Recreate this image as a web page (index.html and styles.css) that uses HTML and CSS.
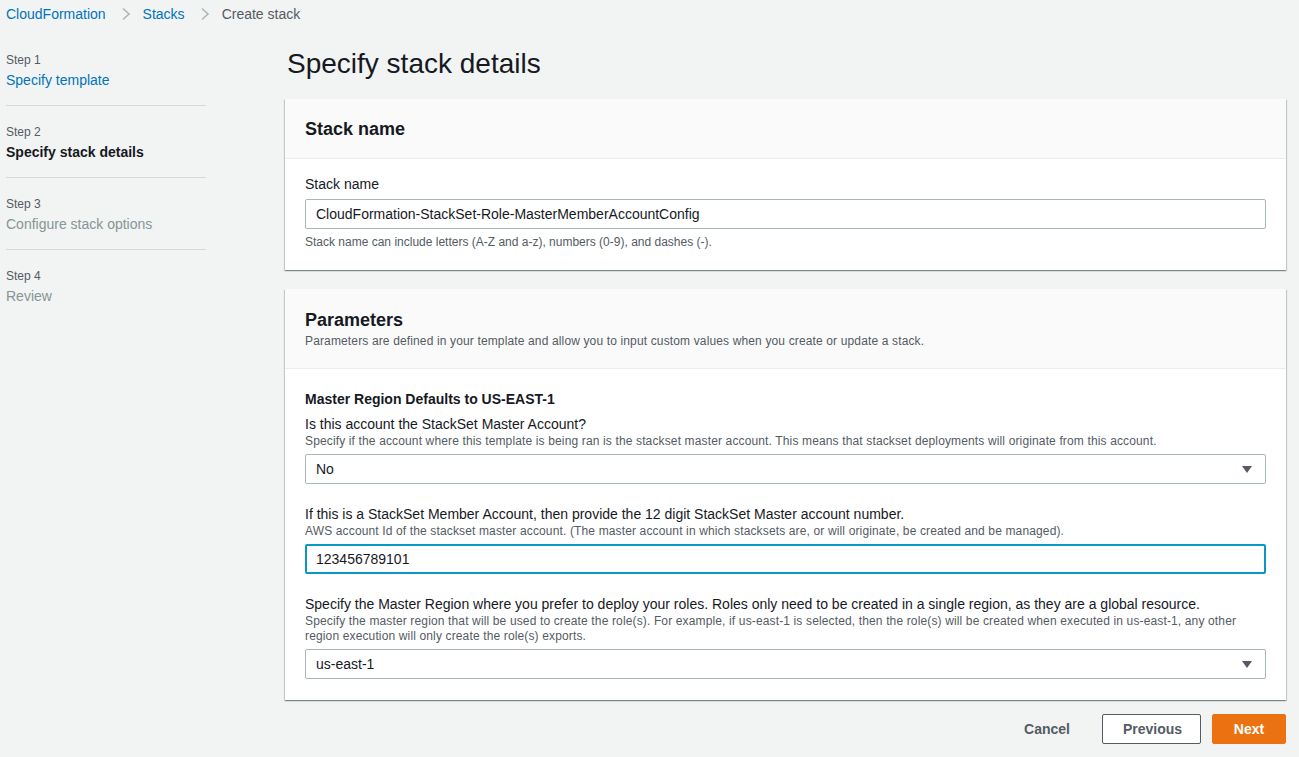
FILE: index.html
```html
<!DOCTYPE html>
<html lang="en">
<head>
<meta charset="utf-8">
<title>Create stack</title>
<link rel="stylesheet" href="styles.css">
</head>
<body>
<nav class="breadcrumbs">
  <a class="crumb link" href="#">CloudFormation</a>
  <svg class="chev" width="10" height="14" viewBox="0 0 10 14"><path d="M2 1.5 L8 7 L2 12.5" fill="none" stroke="#aab7b8" stroke-width="1.6"/></svg>
  <a class="crumb link" href="#">Stacks</a>
  <svg class="chev" width="10" height="14" viewBox="0 0 10 14"><path d="M2 1.5 L8 7 L2 12.5" fill="none" stroke="#aab7b8" stroke-width="1.6"/></svg>
  <span class="crumb current">Create stack</span>
</nav>
<div class="layout">
  <aside class="steps">
    <div class="step">
      <div class="step-num">Step 1</div>
      <a class="step-title link" href="#">Specify template</a>
    </div>
    <div class="step">
      <div class="step-num">Step 2</div>
      <div class="step-title active">Specify stack details</div>
    </div>
    <div class="step">
      <div class="step-num">Step 3</div>
      <div class="step-title disabled">Configure stack options</div>
    </div>
    <div class="step last">
      <div class="step-num">Step 4</div>
      <div class="step-title disabled">Review</div>
    </div>
  </aside>
  <main class="content">
    <h1 class="page-title">Specify stack details</h1>
    <section class="card">
      <div class="card-header name-header">
        <h2 class="card-title">Stack name</h2>
      </div>
      <div class="card-body">
        <div class="label">Stack name</div>
        <div class="input">CloudFormation-StackSet-Role-MasterMemberAccountConfig</div>
        <div class="hint">Stack name can include letters (A-Z and a-z), numbers (0-9), and dashes (-).</div>
      </div>
    </section>
    <section class="card">
      <div class="card-header params-header">
        <h2 class="card-title">Parameters</h2>
        <div class="card-desc">Parameters are defined in your template and allow you to input custom values when you create or update a stack.</div>
      </div>
      <div class="card-body params">
        <h3 class="group-title">Master Region Defaults to US-EAST-1</h3>
        <div class="field first">
          <div class="label">Is this account the StackSet Master Account?</div>
          <div class="desc">Specify if the account where this template is being ran is the stackset master account. This means that stackset deployments will originate from this account.</div>
          <div class="input select">No<svg class="caret" width="10" height="7" viewBox="0 0 10 7"><path d="M0 0 H10 L5 7 Z" fill="#545b64"/></svg></div>
        </div>
        <div class="field">
          <div class="label">If this is a StackSet Member Account, then provide the 12 digit StackSet Master account number.</div>
          <div class="desc">AWS account Id of the stackset master account. (The master account in which stacksets are, or will originate, be created and be managed).</div>
          <div class="input focused">123456789101</div>
        </div>
        <div class="field">
          <div class="label">Specify the Master Region where you prefer to deploy your roles. Roles only need to be created in a single region, as they are a global resource.</div>
          <div class="desc">Specify the master region that will be used to create the role(s). For example, if us-east-1 is selected, then the role(s) will be created when executed in us-east-1, any other region execution will only create the role(s) exports.</div>
          <div class="input select">us-east-1<svg class="caret" width="10" height="7" viewBox="0 0 10 7"><path d="M0 0 H10 L5 7 Z" fill="#545b64"/></svg></div>
        </div>
      </div>
    </section>
    <div class="actions">
      <button class="btn btn-link">Cancel</button>
      <button class="btn btn-normal">Previous</button>
      <button class="btn btn-primary">Next</button>
    </div>
  </main>
</div>
</body>
</html>
```
FILE: styles.css
```css
* { box-sizing: border-box; }
html, body {
  margin: 0;
  padding: 0;
  background: #f2f3f3;
  font-family: "Liberation Sans", Arial, sans-serif;
  color: #16191f;
  font-size: 14px;
}
a { text-decoration: none; }
.link { color: #0073bb; }

.breadcrumbs {
  height: 28px;
  display: flex;
  align-items: center;
  padding-left: 6px;
  font-size: 14px;
}
.crumb { line-height: 28px; }
.chev { margin: 0 12px 0 15px; }
.current { color: #545b64; }

.layout {
  display: flex;
  align-items: flex-start;
  padding-right: 13px;
}
.steps {
  width: 200px;
  margin-left: 6px;
  margin-top: 6px;
  flex: none;
}
.step {
  padding: 18px 0 15px;
  border-bottom: 1px solid #d5dbdb;
}
.step.last { border-bottom: none; }
.step-num {
  font-size: 12px;
  line-height: 16px;
  color: #545b64;
}
.step-title {
  display: block;
  margin-top: 2px;
  font-size: 14px;
  line-height: 20px;
}
.step-title.active { font-weight: bold; color: #16191f; }
.step-title.disabled { color: #879596; }

.content {
  flex: 1;
  margin-left: 79px;
  min-width: 0;
}
.page-title {
  margin: 18px 0 17px 2px;
  font-size: 28px;
  line-height: 36px;
  font-weight: normal;
  color: #16191f;
}
.card {
  background: #fff;
  box-shadow: 0 1px 1px 0 rgba(0,28,36,.3), 1px 1px 1px 0 rgba(0,28,36,.15), -1px 1px 1px 0 rgba(0,28,36,.15);
  margin-bottom: 19px;
}
.card-header {
  background: #fafafa;
  border-bottom: 1px solid #eaeded;
}
.name-header { padding: 19px 20px 18px; }
.params-header { padding: 20px 20px 19px; }
.card-title {
  margin: 0;
  font-size: 18px;
  line-height: 22px;
  font-weight: bold;
}
.card-desc {
  margin-top: 2px;
  font-size: 12px;
  line-height: 16px;
  letter-spacing: 0.14px;
  color: #545b64;
}
.card-body {
  padding: 15px 20px 20px;
}
.card-body.params { padding: 20px 20px 21px; }

.label {
  font-size: 14px;
  line-height: 20px;
  color: #16191f;
}
.input {
  margin-top: 5px;
  height: 30px;
  border: 1px solid #aab7b8;
  border-radius: 2px;
  padding: 0 10px;
  display: flex;
  align-items: center;
  font-size: 14px;
  color: #16191f;
  background: #fff;
}
.input.focused {
  border: 2px solid #0a97c4;
  padding: 0 9px;
}
.select { justify-content: space-between; padding-right: 13px; }
.caret { flex: none; }
.hint {
  margin-top: 5px;
  font-size: 12px;
  line-height: 16px;
  color: #545b64;
}
.group-title {
  margin: 0;
  font-size: 14px;
  line-height: 20px;
  font-weight: bold;
}
.field { margin-top: 20px; }
.field.first { margin-top: 5px; }
.desc {
  font-size: 12px;
  line-height: 15px;
  letter-spacing: 0.14px;
  color: #545b64;
}
.field .input { margin-top: 5px; }

.actions {
  display: flex;
  justify-content: flex-end;
  gap: 11px;
  margin-top: -5px;
}
.btn {
  height: 30px;
  border-radius: 2px;
  font-family: inherit;
  font-size: 14px;
  font-weight: bold;
  padding: 0 20px;
  cursor: pointer;
}
.btn-link {
  background: transparent;
  border: 1px solid transparent;
  color: #545b64;
}
.btn-normal {
  background: #fff;
  border: 1px solid #545b64;
  color: #545b64;
  width: 99px;
}
.btn-primary {
  background: #ec7211;
  border: 1px solid #ec7211;
  color: #fff;
  width: 74px;
}
```
